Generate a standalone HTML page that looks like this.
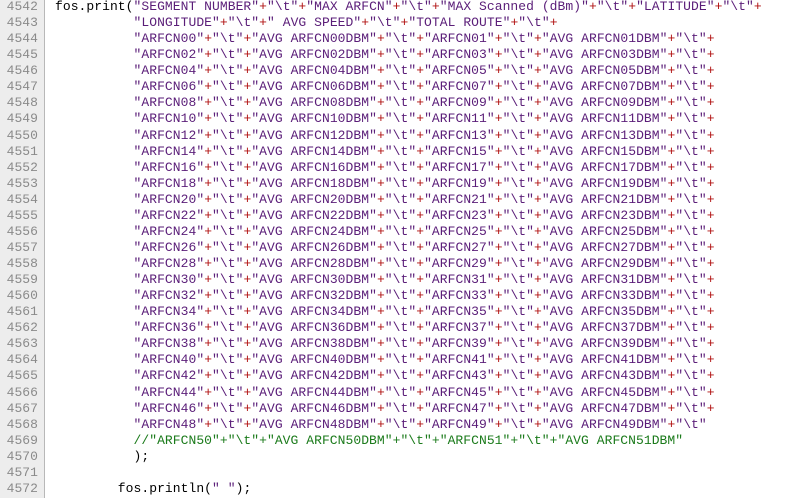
<!DOCTYPE html>
<html><head><meta charset="utf-8"><style>
html,body{margin:0;padding:0;width:786px;height:498px;overflow:hidden;background:#fff;}
.g{position:absolute;left:0;top:0;width:44px;height:498px;background:#ededed;border-right:1px solid #b8b8b8;}
.c{position:absolute;top:-1px;left:0;font-family:"Liberation Mono",monospace;font-size:13px;line-height:16.07px;letter-spacing:0.05px;white-space:pre;}
.n{display:inline-block;width:38px;text-align:right;color:#8a8a8a;margin-right:17px;}
.s{color:#5a1d78}.p{color:#b01010}.k{color:#1a7a1a}
</style></head><body>
<div class="g"></div>
<div class="c" id="c"></div>
<script>
var L=[];
function row(a,b){return '"ARFCN'+a+'"+"\\t"+"AVG ARFCN'+a+'DBM"+"\\t"+"ARFCN'+b+'"+"\\t"+"AVG ARFCN'+b+'DBM"+"\\t"+';}
L.push('fos.print("SEGMENT NUMBER"+"\\t"+"MAX ARFCN"+"\\t"+"MAX Scanned (dBm)"+"\\t"+"LATITUDE"+"\\t"+');
L.push('          "LONGITUDE"+"\\t"+" AVG SPEED"+"\\t"+"TOTAL ROUTE"+"\\t"+');
for(var i=0;i<48;i+=2){var a=(i<10?'0':'')+i,b=(i+1<10?'0':'')+(i+1);L.push('          '+row(a,b));}
L.push('          "ARFCN48"+"\\t"+"AVG ARFCN48DBM"+"\\t"+"ARFCN49"+"\\t"+"AVG ARFCN49DBM"+"\\t"');
L.push('          //"ARFCN50"+"\\t"+"AVG ARFCN50DBM"+"\\t"+"ARFCN51"+"\\t"+"AVG ARFCN51DBM"');
L.push('          );');
L.push('');
L.push('        fos.println(" ");');
function esc(s){return s.replace(/&/g,'&amp;').replace(/</g,'&lt;');}
function hl(s){
 if(s.indexOf('//')>=0)return '<span class="k">'+esc(s)+'</span>';
 var out='',i=0;
 while(i<s.length){var ch=s[i];
  if(ch=='"'){var j=s.indexOf('"',i+1);out+='<span class="s">'+esc(s.slice(i,j+1))+'</span>';i=j+1;}
  else if(ch=='+'){out+='<span class="p">+</span>';i++;}
  else{out+=esc(ch);i++;}}
 return out;}
var h='';
for(var k=0;k<L.length;k++){h+='<span class="n">'+(4542+k)+'</span>'+hl(L[k])+'\n';}
document.getElementById('c').innerHTML=h;
</script>
</body></html>
